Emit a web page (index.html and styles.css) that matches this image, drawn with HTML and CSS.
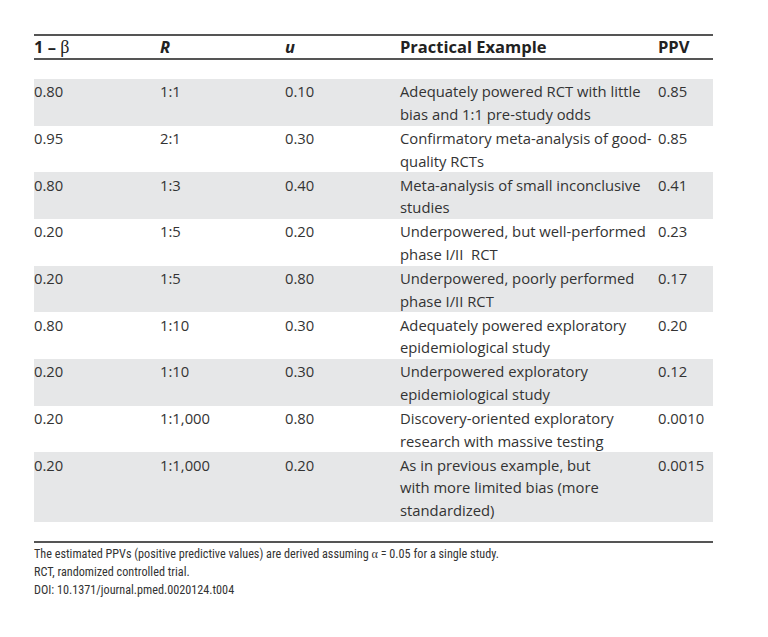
FILE: index.html
```html
<!DOCTYPE html>
<html lang="en">
<head>
<meta charset="utf-8">
<title>Table 4</title>
<link rel="stylesheet" href="styles.css">
</head>
<body>
<div class="wrap">
  <table class="ppv">
    <colgroup>
      <col class="c1"><col class="c2"><col class="c3"><col class="c4"><col class="c5">
    </colgroup>
    <thead>
      <tr>
        <th>1 – <span class="greek">β</span></th>
        <th><i>R</i></th>
        <th><i>u</i></th>
        <th>Practical Example</th>
        <th>PPV</th>
      </tr>
    </thead>
    <tbody>
      <tr class="gap"><td colspan="5"></td></tr>
      <tr class="shade"><td>0.80</td><td>1:1</td><td>0.10</td><td>Adequately powered RCT with little<br>bias and 1:1 pre-study odds</td><td>0.85</td></tr>
      <tr><td>0.95</td><td>2:1</td><td>0.30</td><td>Confirmatory meta-analysis of good-<br>quality RCTs</td><td>0.85</td></tr>
      <tr class="shade"><td>0.80</td><td>1:3</td><td>0.40</td><td>Meta-analysis of small inconclusive<br>studies</td><td>0.41</td></tr>
      <tr><td>0.20</td><td>1:5</td><td>0.20</td><td>Underpowered, but well-performed<br>phase I/II&nbsp; RCT</td><td>0.23</td></tr>
      <tr class="shade"><td>0.20</td><td>1:5</td><td>0.80</td><td>Underpowered, poorly performed<br>phase I/II RCT</td><td>0.17</td></tr>
      <tr><td>0.80</td><td>1:10</td><td>0.30</td><td>Adequately powered exploratory<br>epidemiological study</td><td>0.20</td></tr>
      <tr class="shade"><td>0.20</td><td>1:10</td><td>0.30</td><td>Underpowered exploratory<br>epidemiological study</td><td>0.12</td></tr>
      <tr><td>0.20</td><td>1:1,000</td><td>0.80</td><td>Discovery-oriented exploratory<br>research with massive testing</td><td>0.0010</td></tr>
      <tr class="shade"><td>0.20</td><td>1:1,000</td><td>0.20</td><td>As in previous example, but<br>with more limited bias (more<br>standardized)</td><td>0.0015</td></tr>
      <tr class="gap"><td colspan="5"></td></tr>
    </tbody>
  </table>
  <div class="notes">
    <p>The estimated PPVs (positive predictive values) are derived assuming <span class="greek">α</span> = 0.05 for a single study.</p>
    <p>RCT, randomized controlled trial.</p>
    <p>DOI: 10.1371/journal.pmed.0020124.t004</p>
  </div>
</div>
</body>
</html>
```
FILE: styles.css
```css
html, body {
  margin: 0;
  padding: 0;
  background: #ffffff;
}

.wrap {
  padding: 34px 0 0 34px;
  width: 679px;
}

.ppv {
  width: 679px;
  border-collapse: collapse;
  table-layout: fixed;
  font-family: "Open Sans", "Noto Sans", sans-serif;
  color: #333333;
}

.c1 { width: 126px; }
.c2 { width: 125px; }
.c3 { width: 115px; }
.c4 { width: 258px; }
.c5 { width: 55px; }

.ppv th {
  text-align: left;
  font-weight: 700;
  font-size: 16.5px;
  line-height: 22px;
  height: 22px;
  padding: 0;
  color: #222222;
  border-top: 2px solid #555555;
  border-bottom: 2px solid #555555;
  white-space: nowrap;
}

.ppv th .greek {
  font-family: "Liberation Serif", "DejaVu Serif", serif;
  font-weight: 400;
  font-size: 18px;
}

.ppv td {
  padding: 1.33px 0 0 0;
  font-size: 14.8px;
  line-height: 22.67px;
  vertical-align: top;
  white-space: nowrap;
}

.ppv tr.gap td {
  height: 19px;
  padding: 0;
  line-height: 0;
}

.ppv tr.shade td {
  background: #e6e7e8;
}

.notes {
  border-top: 2px solid #555555;
  padding-top: 2px;
  font-family: "Liberation Sans Narrow", "Roboto Condensed", "Liberation Sans", sans-serif;
  font-size: 12.2px;
  line-height: 18px;
  color: #333333;
}

.notes p {
  margin: 0;
}

.notes .greek {
  font-family: "Liberation Serif", serif;
}
```
